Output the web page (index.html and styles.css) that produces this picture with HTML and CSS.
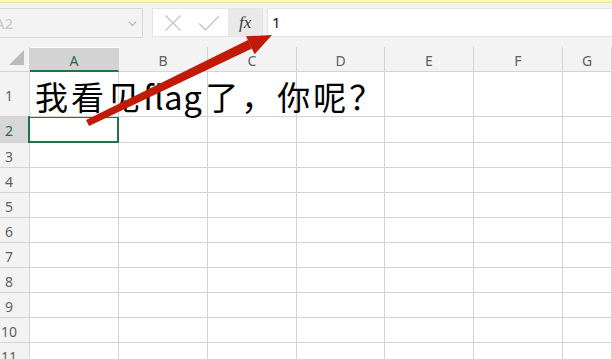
FILE: index.html
```html
<!DOCTYPE html>
<html lang="zh">
<head>
<meta charset="utf-8">
<title>Sheet</title>
<link rel="stylesheet" href="styles.css">
</head>
<body>
<div class="app">
  <div class="notice"></div>
  <div class="toolbar">
    <div class="namebox">
      <span class="name">A2</span>
      <svg class="chev" width="9" height="6" viewBox="0 0 9 6"><path d="M1 1 L4.5 4.5 L8 1" fill="none" stroke="#b8b8b8" stroke-width="1.2"/></svg>
    </div>
    <div class="fbtns">
      <span class="fbtn"><svg width="18" height="18" viewBox="0 0 18 18"><path d="M1.5 1.5 L16.5 16.5 M16.5 1.5 L1.5 16.5" stroke="#c4c4c4" stroke-width="1.3" fill="none"/></svg></span>
      <span class="fbtn"><svg width="22" height="16" viewBox="0 0 22 16"><path d="M1 8.5 L7.5 15 L21 1" stroke="#c4c4c4" stroke-width="1.3" fill="none"/></svg></span>
      <span class="fx">fx</span>
    </div>
    <div class="finput">1</div>
  </div>
  <div class="sheet">
    <div class="corner"><span class="tri"></span></div>
    <div class="ch sel">A</div>
    <div class="ch">B</div>
    <div class="ch">C</div>
    <div class="ch">D</div>
    <div class="ch">E</div>
    <div class="ch">F</div>
    <div class="ch">G</div>

    <div class="rh">1</div>
    <div class="c big"><span class="txt"><span class="cjk">我看见</span><span class="lat">flag</span><span class="cjk">了，你呢？</span></span></div>
    <div class="c"></div><div class="c"></div><div class="c"></div><div class="c"></div><div class="c"></div><div class="c"></div>

    <div class="rh sel">2</div>
    <div class="c active"><span class="selbox"></span></div>
    <div class="c"></div><div class="c"></div><div class="c"></div><div class="c"></div><div class="c"></div><div class="c"></div>

    <div class="rh">3</div>
    <div class="c"></div><div class="c"></div><div class="c"></div><div class="c"></div><div class="c"></div><div class="c"></div><div class="c"></div>
    <div class="rh">4</div>
    <div class="c"></div><div class="c"></div><div class="c"></div><div class="c"></div><div class="c"></div><div class="c"></div><div class="c"></div>
    <div class="rh">5</div>
    <div class="c"></div><div class="c"></div><div class="c"></div><div class="c"></div><div class="c"></div><div class="c"></div><div class="c"></div>
    <div class="rh">6</div>
    <div class="c"></div><div class="c"></div><div class="c"></div><div class="c"></div><div class="c"></div><div class="c"></div><div class="c"></div>
    <div class="rh">7</div>
    <div class="c"></div><div class="c"></div><div class="c"></div><div class="c"></div><div class="c"></div><div class="c"></div><div class="c"></div>
    <div class="rh">8</div>
    <div class="c"></div><div class="c"></div><div class="c"></div><div class="c"></div><div class="c"></div><div class="c"></div><div class="c"></div>
    <div class="rh">9</div>
    <div class="c"></div><div class="c"></div><div class="c"></div><div class="c"></div><div class="c"></div><div class="c"></div><div class="c"></div>
    <div class="rh">10</div>
    <div class="c"></div><div class="c"></div><div class="c"></div><div class="c"></div><div class="c"></div><div class="c"></div><div class="c"></div>
    <div class="rh">11</div>
    <div class="c"></div><div class="c"></div><div class="c"></div><div class="c"></div><div class="c"></div><div class="c"></div><div class="c"></div>
  </div>
  <svg class="arrow" width="612" height="359" viewBox="0 0 612 359">
    <path d="M86 120 L89 126 L252 48.5 L248 40 Z" fill="#c21a08"/>
    <path d="M272 35 L246 36.3 L254.6 54.3 Z" fill="#c21a08"/>
  </svg>
</div>
</body>
</html>
```
FILE: styles.css
```css
* { box-sizing: border-box; }
html, body { margin: 0; padding: 0; }
body {
  width: 612px;
  height: 359px;
  overflow: hidden;
  background: #f3f3f3;
  font-family: "Noto Sans", "Liberation Sans", sans-serif;
}
.app { position: relative; width: 612px; height: 359px; overflow: hidden; }
.notice {
  height: 3px;
  background: #fdf4c2;
  border-bottom: 1px solid #eee3a3;
}
.toolbar {
  display: flex;
  align-items: flex-start;
  height: 44px;
  padding-top: 5px;
}
.namebox {
  width: 151px;
  height: 30px;
  margin-left: -8px;
  border: 1px solid #d8d8d8;
  background: #f3f3f3;
  display: flex;
  align-items: center;
  justify-content: space-between;
  padding: 0 5px 0 2px;
}
.name { color: #c6c6c6; font-size: 15px; }
.chev { margin-top: 1px; }
.fbtns {
  margin-left: 9px;
  width: 111px;
  height: 29px;
  background: #fff;
  border: 1px solid #e4e4e4;
  display: flex;
  align-items: center;
}
.fbtn { display: flex; align-items: center; justify-content: center; width: 38px; }
.fbtn:first-child { padding-left: 2px; }
.fx {
  margin-left: auto;
  width: 34px;
  height: 100%;
  background: #e9e9e9;
  font-family: "Liberation Serif", serif;
  font-style: italic;
  font-size: 17px;
  color: #3a3a3a;
  display: flex;
  align-items: center;
  justify-content: center;
}
.finput {
  margin-left: 4px;
  flex: 1;
  height: 29px;
  background: #fff;
  border: 1px solid #e4e4e4;
  border-right: none;
  font-size: 15px;
  color: #111;
  padding: 3px 0 0 4px;
}
.sheet {
  display: grid;
  grid-template-columns: 30px 89px 89px 89px 88px 89px 89px 1fr;
  grid-template-rows: 25px 45px 26px repeat(9, 25px);
  background: #fff;
}
.corner, .ch, .rh {
  background: #f3f3f3;
  color: #5f5f5f;
  font-size: 14px;
}
.corner {
  border-right: 1px solid #d4d4d4;
  border-bottom: 1px solid #d4d4d4;
  position: relative;
}
.tri {
  position: absolute;
  left: 9px;
  top: 3px;
  width: 15px;
  height: 15px;
  background: #bcbcbc;
  clip-path: polygon(100% 0, 100% 100%, 0 100%);
}
.ch {
  border-right: 1px solid #d4d4d4;
  border-bottom: 1px solid #d4d4d4;
  display: flex;
  align-items: center;
  justify-content: center;
  padding-top: 2px;
}
.ch.sel {
  background: #d3d3d3;
  color: #1e6e3e;
  border-bottom: 2px solid #217346;
  margin-top: 1px;
}
.rh {
  border-right: 1px solid #d4d4d4;
  border-bottom: 1px solid #d4d4d4;
  display: flex;
  align-items: center;
  justify-content: center;
  padding-right: 11px;
  padding-top: 2px;
  white-space: nowrap;
}
.rh.sel { background: #d7d7d7; color: #1e6e3e; }
.c {
  border-right: 1px solid #d4d4d4;
  border-bottom: 1px solid #d4d4d4;
  position: relative;
}
.big {
  overflow: visible;
  white-space: nowrap;
  display: flex;
  align-items: flex-end;
  padding-left: 5px;
  z-index: 1;
}
.txt {
  font-family: "Noto Sans CJK SC", "Noto Sans", sans-serif;
  font-size: 33px;
  line-height: 40px;
  color: #000;
}
.cjk { letter-spacing: 3px; }
.lat { letter-spacing: 0.5px; margin-right: 3px; }
.selbox {
  position: absolute;
  left: -2px;
  top: -1px;
  right: -1px;
  bottom: -1px;
  border: 2px solid #217346;
}
.arrow {
  position: absolute;
  left: 0;
  top: 0;
  z-index: 5;
  pointer-events: none;
}
```
